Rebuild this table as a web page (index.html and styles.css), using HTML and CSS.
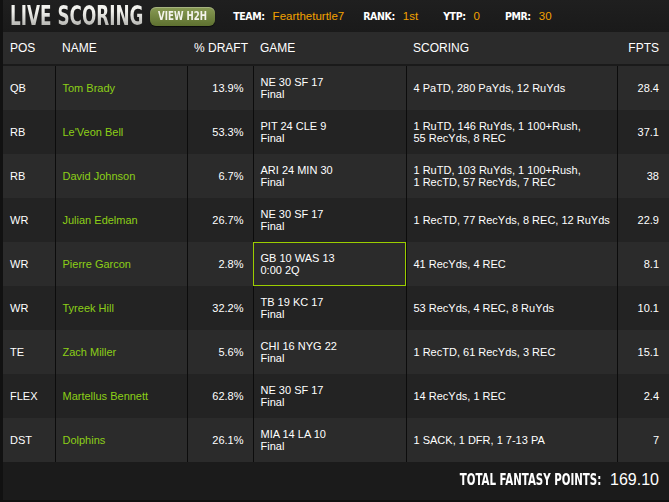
FILE: index.html
```html
<!DOCTYPE html>
<html lang="en">
  <head>
    <meta charset="UTF-8">
    <title>Live Scoring</title>
    <link rel="stylesheet" href="styles.css">
  </head>
  <body>
    <div class="panel">
      <!-- Top bar -->
      <div class="topbar">
        <h1 class="title">LIVE SCORING</h1>
        <a class="h2h-btn"><span>VIEW H2H</span></a>
        <div class="stat team"><span class="label">TEAM:</span><span class="value">Feartheturtle7</span></div>
        <div class="stat rank"><span class="label">RANK:</span><span class="value">1st</span></div>
        <div class="stat ytp"><span class="label">YTP:</span><span class="value">0</span></div>
        <div class="stat pmr"><span class="label">PMR:</span><span class="value">30</span></div>
      </div>
      <!-- Scoring table -->
      <table class="scoring">
        <thead>
          <tr>
            <th class="c-pos">POS</th>
            <th class="c-name">NAME</th>
            <th class="c-draft">% DRAFT</th>
            <th class="c-game">GAME</th>
            <th class="c-score">SCORING</th>
            <th class="c-fpts">FPTS</th>
          </tr>
        </thead>
        <tbody>
          <tr>
            <td>QB</td><td class="player">Tom Brady</td><td class="num">13.9%</td>
            <td>NE 30 SF 17<br>Final</td><td>4 PaTD, 280 PaYds, 12 RuYds</td><td class="num">28.4</td>
          </tr>
          <tr>
            <td>RB</td><td class="player">Le'Veon Bell</td><td class="num">53.3%</td>
            <td>PIT 24 CLE 9<br>Final</td><td>1 RuTD, 146 RuYds, 1 100+Rush,<br>55 RecYds, 8 REC</td><td class="num">37.1</td>
          </tr>
          <tr>
            <td>RB</td><td class="player">David Johnson</td><td class="num">6.7%</td>
            <td>ARI 24 MIN 30<br>Final</td><td>1 RuTD, 103 RuYds, 1 100+Rush,<br>1 RecTD, 57 RecYds, 7 REC</td><td class="num">38</td>
          </tr>
          <tr>
            <td>WR</td><td class="player">Julian Edelman</td><td class="num">26.7%</td>
            <td>NE 30 SF 17<br>Final</td><td>1 RecTD, 77 RecYds, 8 REC, 12 RuYds</td><td class="num">22.9</td>
          </tr>
          <tr>
            <td>WR</td><td class="player">Pierre Garcon</td><td class="num">2.8%</td>
            <td class="live">GB 10 WAS 13<br>0:00 2Q</td><td>41 RecYds, 4 REC</td><td class="num">8.1</td>
          </tr>
          <tr>
            <td>WR</td><td class="player">Tyreek Hill</td><td class="num">32.2%</td>
            <td>TB 19 KC 17<br>Final</td><td>53 RecYds, 4 REC, 8 RuYds</td><td class="num">10.1</td>
          </tr>
          <tr>
            <td>TE</td><td class="player">Zach Miller</td><td class="num">5.6%</td>
            <td>CHI 16 NYG 22<br>Final</td><td>1 RecTD, 61 RecYds, 3 REC</td><td class="num">15.1</td>
          </tr>
          <tr>
            <td>FLEX</td><td class="player">Martellus Bennett</td><td class="num">62.8%</td>
            <td>NE 30 SF 17<br>Final</td><td>14 RecYds, 1 REC</td><td class="num">2.4</td>
          </tr>
          <tr>
            <td>DST</td><td class="player">Dolphins</td><td class="num">26.1%</td>
            <td>MIA 14 LA 10<br>Final</td><td>1 SACK, 1 DFR, 1 7-13 PA</td><td class="num">7</td>
          </tr>
        </tbody>
      </table>
      <!-- Footer total -->
      <div class="total">
        <span class="total-label">TOTAL FANTASY POINTS:</span>
        <span class="total-value">169.10</span>
      </div>
    </div>
  </body>
</html>
```

FILE: styles.css
```css
/* General */
body {
  margin: 0;
  background: #111;
  font-family: "Liberation Sans", Arial, sans-serif;
  color: #fff;
}

.panel {
  margin-left: 3px;
  width: 666px;
  height: 500px;
  background: #1b1b1b;
  overflow: hidden;
}

/* Top bar */
.topbar {
  display: flex;
  align-items: center;
  height: 32px;
  background: linear-gradient(to bottom, #1f1f1f, #1a1a1a);
}

.title {
  display: inline-block;
  margin: 0 -48px 0 7px;
  font-family: "DejaVu Sans Condensed", sans-serif;
  font-weight: bold;
  font-size: 26px;
  line-height: 32px;
  background: linear-gradient(to bottom, #f2f2ee 35%, #9a9a96 100%);
  -webkit-background-clip: text;
  background-clip: text;
  color: transparent;
  transform: scaleX(0.72);
  transform-origin: left center;
  white-space: nowrap;
}

.h2h-btn {
  display: flex;
  justify-content: center;
  align-items: center;
  margin-left: 3px;
  width: 65px;
  height: 19px;
  border-radius: 6px;
  background: linear-gradient(to bottom, #899b55, #5e7130);
  box-shadow: inset 0 1px 0 rgba(255, 255, 255, 0.25), 0 1px 1px rgba(0, 0, 0, 0.6);
}

.h2h-btn span {
  display: inline-block;
  font-family: "DejaVu Sans Condensed", sans-serif;
  font-weight: bold;
  font-size: 12px;
  color: #f4f4ec;
  white-space: nowrap;
  transform: scaleX(0.8);
}

.stat {
  display: flex;
  align-items: baseline;
  font-size: 11.5px;
}

.stat .label {
  font-family: "DejaVu Sans Condensed", sans-serif;
  font-weight: bold;
  font-size: 10.5px;
  letter-spacing: -0.4px;
  margin-right: 8px;
}

.stat .value {
  color: #f3a100;
}

.team { margin-left: 18px; }
.rank { margin-left: 19px; }
.ytp { margin-left: 25px; }
.pmr { margin-left: 25px; }

/* Table */
.scoring {
  border-collapse: collapse;
  width: 666px;
  table-layout: fixed;
  font-size: 11px;
}

.scoring th {
  height: 32px;
  padding: 0 0 0 7px;
  text-align: left;
  font-weight: normal;
  font-size: 12px;
  background: #2b2b2b;
  border-bottom: 2px solid #1a1a1a;
}

.scoring th.c-fpts {
  text-align: right;
  padding-right: 10px;
}

.c-pos { width: 45px; }
.c-name { width: 125px; }
.c-draft { width: 59px; }
.c-game { width: 146px; }
.c-score { width: 204px; }

.scoring td {
  height: 44px;
  padding: 0 0 0 7px;
  line-height: 12px;
  border-left: 1px solid #0c0c0c;
  background: #2b2b2b;
}

.scoring td:first-child {
  border-left: none;
}

.scoring tbody tr:nth-child(even) td {
  background: #232323;
}

.scoring td.player {
  color: #8ccf17;
}

.scoring td.num {
  text-align: right;
  padding-right: 9px;
}

.scoring td:last-child {
  padding-right: 10px;
}

.scoring tbody tr td.live {
  background: #2b2b2b;
  outline: 1px solid #9bcd00;
  outline-offset: -1px;
}

/* Total */
.total {
  display: flex;
  justify-content: flex-end;
  align-items: center;
  height: 36px;
  padding-right: 10px;
  background: #1b1b1b;
}

.total-label {
  display: inline-block;
  font-family: "DejaVu Sans Condensed", sans-serif;
  font-weight: bold;
  font-size: 15px;
  margin-right: 9px;
  margin-left: -44px;
  transform: scaleX(0.76);
  transform-origin: right center;
  white-space: nowrap;
}

.total-value {
  font-size: 16px;
}
```
